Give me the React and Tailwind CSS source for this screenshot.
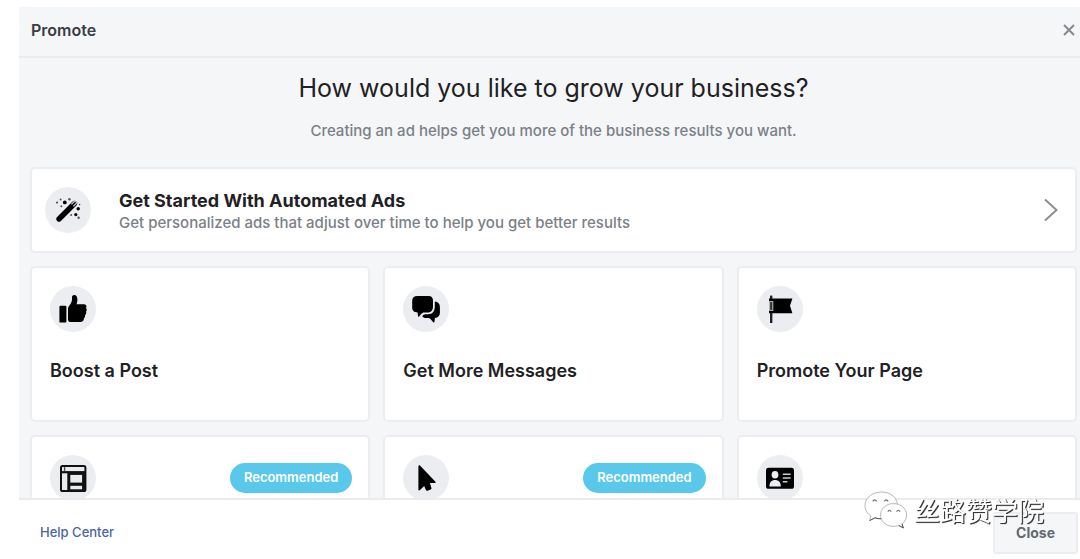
import React from 'react';

function WandIcon() {
  return (
    <svg viewBox="0 0 28 28" className="size-7" aria-hidden="true">
      <path d="M5 23 L20.5 7.5" stroke="#000" strokeWidth="5.4" strokeLinecap="round" />
      <path d="M17.4 8.4 L20.6 5.2 Q22.6 4.8 22.6 7 L19.4 10.4" stroke="#c4c6ca" strokeWidth="1.3" fill="none" />
      <g fill="#000">
        <circle cx="10.8" cy="6.4" r="1.9" />
        <circle cx="24.2" cy="12.8" r="1.7" />
        <circle cx="21.8" cy="18.6" r="1.6" />
      </g>
      <g fill="#555">
        <circle cx="6.6" cy="3.6" r="1" />
        <circle cx="3" cy="6.6" r="1.1" />
        <circle cx="7.4" cy="10.2" r="1" />
        <circle cx="15.4" cy="3.2" r="1.2" />
        <circle cx="17.2" cy="19" r="1" />
        <circle cx="24.6" cy="21.8" r="1.2" />
        <circle cx="25.6" cy="8.6" r="0.8" />
      </g>
    </svg>
  );
}

function ThumbIcon() {
  return (
    <svg viewBox="0 0 28 28" className="size-7" aria-hidden="true">
      <rect x="0.4" y="10.8" width="7" height="16.8" rx="1.2" />
      <path d="M9 13.6 C9 12.6 9.4 11.9 10 11.1 C11.8 8.9 13 6.8 13 4.2 V2 C13 0.7 14 0 15.2 0 C17.4 0 18.4 2 18.4 4.4 C18.4 6.4 18 7.8 17.6 9.2 H25 C26.8 9.2 27.8 10.6 27.4 12 C27.3 12.5 27.1 12.8 26.9 13 C28 14 28 15.6 27 16.7 C27.5 17.8 27.2 19.3 26 20.2 C26.3 21.4 26 22.6 24.9 23.4 C25 25.6 23.6 27 21.4 27 H12 C10.2 27 9 26 9 24.4 Z" />
    </svg>
  );
}

function ChatIcon() {
  return (
    <svg viewBox="0 0 28 28" className="size-7" aria-hidden="true">
      <path d="M5.4 1 H16.6 C19.6 1 21 2.8 21 5.6 V11.6 C21 15.4 19.4 17.4 16.4 17.4 H12 C10.4 17.4 9.2 18.6 7.2 21.4 C6.8 22 6.1 21.8 6 21 L5.6 17.4 C2.2 17.4 0.2 16 0.2 12.8 V5.8 C0.2 2.6 2 1 5.4 1 Z" />
      <path d="M22.8 6.6 C26.2 7 27.9 9 27.9 12 V17.6 C27.9 20.8 26.2 22.8 22.9 23 L22.5 26.8 C22.4 27.6 21.8 27.8 21.2 27.2 C19 24.6 18 23 16 23 H14 C12.2 23 11 22.4 10.2 21.2 C11 20 12 19.2 13.4 19.2 H16 C20.4 19.2 22.8 16.4 22.8 12 Z" />
    </svg>
  );
}

function FlagIcon() {
  return (
    <svg viewBox="0 0 28 28" className="size-7" aria-hidden="true">
      <path d="M5.2 0.6 V28" stroke="#222" strokeWidth="2.4" />
      <path d="M3 3.6 H26.4 L24 10.8 L26.4 18.2 H3 Z" />
      <rect x="3.6" y="6.6" width="3.2" height="8.8" fill="#333" stroke="#bfc1c5" strokeWidth="1" />
    </svg>
  );
}

function LayoutIcon() {
  return (
    <svg viewBox="0 0 28 28" className="size-7" aria-hidden="true">
      <rect x="2" y="2" width="24.4" height="25" rx="1.6" fill="#e9ebee" stroke="#111" strokeWidth="2" />
      <path d="M2 8.2 H26" stroke="#111" strokeWidth="2.2" />
      <path d="M5.6 3.2 V6.8" stroke="#444" strokeWidth="1.4" />
      <rect x="9.8" y="9.4" width="14.8" height="17.4" fill="#e9ebee" stroke="#111" strokeWidth="3" />
      <path d="M10 20.2 H25" stroke="#111" strokeWidth="3.2" />
    </svg>
  );
}

function CursorIcon() {
  return (
    <svg viewBox="0 0 28 28" className="size-7" aria-hidden="true">
      <path d="M6.4 2.4 C6.4 1.3 7.4 1 8.2 1.8 L23.2 17.4 C24 18.3 23.6 19 22.6 19 H18 L19.4 24 C19.6 24.8 19.2 25.3 18.6 25.6 L15.6 26.7 C14.8 27 14.2 26.7 13.9 26 L12.2 22 L8 26 C7.2 26.7 6.4 26.4 6.4 25.4 Z" />
    </svg>
  );
}

function IdCardIcon() {
  return (
    <svg viewBox="0 0 28 28" className="size-7" aria-hidden="true">
      <rect x="0" y="3.8" width="28" height="21" rx="2.6" />
      <g fill="#eceef1">
        <ellipse cx="9" cy="10.8" rx="3.4" ry="3.8" />
        <path d="M3.4 22.4 C3.4 18.2 5.6 16 9 16 C12.6 16 14.8 18.2 14.8 22.4 Z" />
      </g>
      <path d="M16.8 10.2 H24.6 M16.8 14 H24.6 M16.8 17.8 H21.4" stroke="#c9cbd0" strokeWidth="1.4" />
    </svg>
  );
}

function WeChatMark() {
  return (
    <svg viewBox="0 0 44 38" className="h-[38px] w-11" aria-hidden="true">
      <g fill="#fff" stroke="#999" strokeWidth="0.7">
        <path d="M17.5 1 C8 1 1 7 1 14.6 C1 19 3.2 22.6 7 25 L5.6 29.6 L11 26.8 C13.2 27.6 15.4 27.8 17.5 27.8 C27 27.8 33.5 21.8 33.5 14.4 C33.5 7 27 1 17.5 1 Z" />
        <path d="M29.5 12.6 C22 12.6 16.6 17.6 16.6 24 C16.6 30.6 22.2 35.4 29.6 35.4 C31.4 35.4 33.2 35.1 34.8 34.5 L39.4 37 L38 32.9 C41 30.8 42.6 27.6 42.6 24 C42.6 17.6 37 12.6 29.5 12.6 Z" />
      </g>
      <path d="M5.6 29.6 L11 26.8 C13 27.5 15 27.8 17 27.8 M34.8 34.5 L39.4 37 L38 32.9" fill="none" stroke="#555" strokeWidth="1" />
      <g fill="none" stroke="#666" strokeWidth="1.1">
        <path d="M8.8 10.4 Q10.6 7.4 12.6 10.4 M20.4 10.4 Q22.2 7.4 24.2 10.4" />
        <path d="M23.8 20.6 Q25.4 18 27.2 20.6 M32.6 20.6 Q34.2 18 36 20.6" />
      </g>
    </svg>
  );
}

function IconBadge({ children }) {
  return (
    <span className="flex size-[46px] shrink-0 items-center justify-center rounded-full bg-[#ebedf0]">
      {children}
    </span>
  );
}

const goals = [
  { title: 'Boost a Post', Icon: ThumbIcon },
  { title: 'Get More Messages', Icon: ChatIcon },
  { title: 'Promote Your Page', Icon: FlagIcon },
  { Icon: LayoutIcon, recommended: true },
  { Icon: CursorIcon, recommended: true },
  { Icon: IdCardIcon },
];

function GoalCard({ title, Icon, recommended }) {
  return (
    <button
      type="button"
      className="flex h-39 flex-col gap-[25px] rounded-[5px] border-2 border-[#ebedf0] bg-white pt-[18px] pr-4 pl-[18px] text-left"
    >
      <span className="flex w-full items-center justify-between">
        <IconBadge>
          <Icon />
        </IconBadge>
        {recommended && (
          <span className="flex h-[30px] items-center rounded-full bg-[#5ac8eb] px-[14px] text-[13px] font-semibold text-white">
            Recommended
          </span>
        )}
      </span>
      {title && <span className="text-lg font-semibold">{title}</span>}
    </button>
  );
}

export default function App() {
  return (
    <div className="flex h-screen flex-col bg-white pt-[7px] pl-[19px] font-['Inter','Noto_Sans_CJK_SC',sans-serif] text-[#1f2124]">
      <header className="flex h-[51px] shrink-0 items-center justify-between border-b-2 border-[#e9ebed] bg-[#f5f6f8] pr-[3px] pb-1 pl-3">
        <h1 className="text-base font-semibold text-[#3a3d42]">Promote</h1>
        <button type="button" aria-label="Close dialog" className="p-0.5">
          <svg viewBox="0 0 12 12" className="size-3" fill="none" stroke="#858a91" strokeWidth="2" aria-hidden="true">
            <path d="M1 1 L11 11 M11 1 L1 11" />
          </svg>
        </button>
      </header>

      <main className="min-h-0 flex-1 overflow-y-auto bg-[#f5f6f8] pr-[3px] pl-[11px] [scrollbar-width:none]">
        <h2 className="pt-3 text-center text-[25px] leading-9">How would you like to grow your business?</h2>
        <p className="pt-[13px] pb-6 text-center text-[15px] leading-6 font-medium text-[#7b8087]">
          Creating an ad helps get you more of the business results you want.
        </p>
        <button
          type="button"
          className="mb-[13px] flex h-[86px] w-full items-center rounded-[5px] border-2 border-[#ebedf0] bg-white pr-[17px] pl-[13px] text-left"
        >
          <IconBadge>
            <WandIcon />
          </IconBadge>
          <span className="flex flex-1 flex-col pt-1 pl-7">
            <span className="text-lg leading-[22px] font-bold">Get Started With Automated Ads</span>
            <span className="text-[15px] leading-[22px] font-medium text-[#7b8087]">
              Get personalized ads that adjust over time to help you get better results
            </span>
          </span>
          <svg viewBox="0 0 14 24" className="h-6 w-3.5" fill="none" stroke="#8a8e96" strokeWidth="2" aria-hidden="true">
            <path d="M1 1.5 L12.5 12 L1 22.5" />
          </svg>
        </button>
        <div className="grid grid-cols-3 gap-[13px]">
          {goals.map((goal, i) => (
            <GoalCard key={i} {...goal} />
          ))}
        </div>
      </main>

      <footer className="relative flex shrink-0 items-center justify-between border-t-2 border-[#e9ebed] bg-white pt-3 pr-[2px] pb-[5px] pl-[21px]">
        <a href="#help" className="text-[13px] font-medium text-[#4966a3]">
          Help Center
        </a>
        <button
          type="button"
          className="h-[42px] rounded-[3px] border-2 border-[#ebedf0] bg-[#f5f6f8] px-[21px] text-sm font-bold text-[#65686e]"
        >
          Close
        </button>
        <div className="pointer-events-none absolute -top-[10px] right-9 flex items-center gap-1.5">
          <WeChatMark />
          <span className="font-['Noto_Sans_CJK_SC',sans-serif] text-[26px] leading-10 text-white [text-shadow:1px_1px_1px_#333,1px_1px_0_#555]">
            丝路赞学院
          </span>
        </div>
      </footer>
    </div>
  );
}
